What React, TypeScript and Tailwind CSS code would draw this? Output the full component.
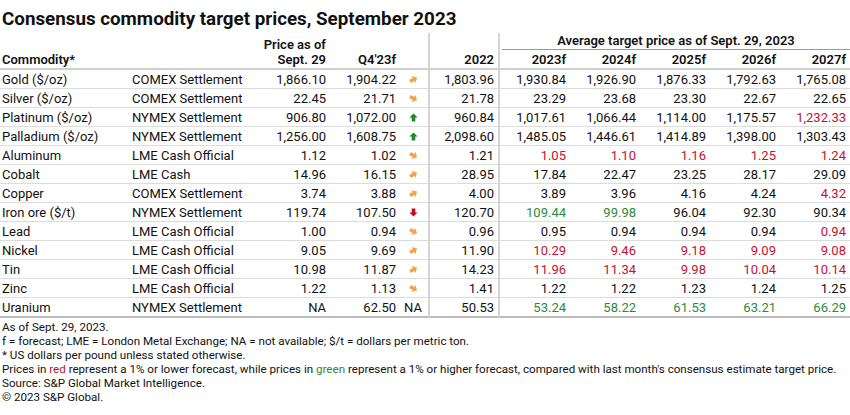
import React from "react";

type Trend = "up" | "down" | "flatUp" | "flatDown" | "na";
type C = "k" | "r" | "g";
type Row = {
  name: string;
  ex: string;
  price: string;
  q4: string;
  trend: Trend;
  y22: string;
  f: [string, C][];
};

const rows: Row[] = [
  { name: "Gold ($/oz)", ex: "COMEX Settlement", price: "1,866.10", q4: "1,904.22", trend: "flatUp", y22: "1,803.96", f: [["1,930.84", "k"], ["1,926.90", "k"], ["1,876.33", "k"], ["1,792.63", "k"], ["1,765.08", "k"]] },
  { name: "Silver ($/oz)", ex: "COMEX Settlement", price: "22.45", q4: "21.71", trend: "flatDown", y22: "21.78", f: [["23.29", "k"], ["23.68", "k"], ["23.30", "k"], ["22.67", "k"], ["22.65", "k"]] },
  { name: "Platinum ($/oz)", ex: "NYMEX Settlement", price: "906.80", q4: "1,072.00", trend: "up", y22: "960.84", f: [["1,017.61", "k"], ["1,066.44", "k"], ["1,114.00", "k"], ["1,175.57", "k"], ["1,232.33", "r"]] },
  { name: "Palladium ($/oz)", ex: "NYMEX Settlement", price: "1,256.00", q4: "1,608.75", trend: "up", y22: "2,098.60", f: [["1,485.05", "k"], ["1,446.61", "k"], ["1,414.89", "k"], ["1,398.00", "k"], ["1,303.43", "k"]] },
  { name: "Aluminum", ex: "LME Cash Official", price: "1.12", q4: "1.02", trend: "flatDown", y22: "1.21", f: [["1.05", "r"], ["1.10", "r"], ["1.16", "r"], ["1.25", "r"], ["1.24", "r"]] },
  { name: "Cobalt", ex: "LME Cash", price: "14.96", q4: "16.15", trend: "flatUp", y22: "28.95", f: [["17.84", "k"], ["22.47", "k"], ["23.25", "k"], ["28.17", "k"], ["29.09", "k"]] },
  { name: "Copper", ex: "COMEX Settlement", price: "3.74", q4: "3.88", trend: "flatUp", y22: "4.00", f: [["3.89", "k"], ["3.96", "k"], ["4.16", "k"], ["4.24", "k"], ["4.32", "r"]] },
  { name: "Iron ore ($/t)", ex: "NYMEX Settlement", price: "119.74", q4: "107.50", trend: "down", y22: "120.70", f: [["109.44", "g"], ["99.98", "g"], ["96.04", "k"], ["92.30", "k"], ["90.34", "k"]] },
  { name: "Lead", ex: "LME Cash Official", price: "1.00", q4: "0.94", trend: "flatDown", y22: "0.96", f: [["0.95", "k"], ["0.94", "k"], ["0.94", "k"], ["0.94", "k"], ["0.94", "r"]] },
  { name: "Nickel", ex: "LME Cash Official", price: "9.05", q4: "9.69", trend: "flatUp", y22: "11.90", f: [["10.29", "r"], ["9.46", "r"], ["9.18", "r"], ["9.09", "r"], ["9.08", "r"]] },
  { name: "Tin", ex: "LME Cash Official", price: "10.98", q4: "11.87", trend: "flatUp", y22: "14.23", f: [["11.96", "r"], ["11.34", "r"], ["9.98", "r"], ["10.04", "r"], ["10.14", "r"]] },
  { name: "Zinc", ex: "LME Cash Official", price: "1.22", q4: "1.13", trend: "flatDown", y22: "1.41", f: [["1.22", "k"], ["1.22", "k"], ["1.23", "k"], ["1.24", "k"], ["1.25", "k"]] },
  { name: "Uranium", ex: "NYMEX Settlement", price: "NA", q4: "62.50", trend: "na", y22: "50.53", f: [["53.24", "g"], ["58.22", "g"], ["61.53", "g"], ["63.21", "g"], ["66.29", "g"]] },
];

const colorClass: Record<C, string> = {
  k: "text-[#111111]",
  r: "text-[#c8102e]",
  g: "text-[#2a8c3a]",
};

function Arrow({ trend }: { trend: Trend }) {
  if (trend === "na") return <span className="text-[13px] leading-none">NA</span>;
  const fill =
    trend === "up" ? "#1a8a2e" : trend === "down" ? "#c00f1f" : "#f5a445";
  const rot =
    trend === "up" ? 0 : trend === "down" ? 180 : trend === "flatUp" ? 60 : 120;
  return (
    <svg width="9" height="9" viewBox="0 0 10 10" className="block">
      <g transform={`rotate(${rot} 5 5)`}>
        <path d="M5 0.5 L9.5 5 L7 5 L7 9.5 L3 9.5 L3 5 L0.5 5 Z" fill={fill} />
      </g>
    </svg>
  );
}

const grid =
  "grid grid-cols-[130px_120px_80px_70px_30px_70px_70px_70px_70px_70px_70px]";

export default function App() {
  return (
    <div
      className="w-[850px] h-[415px] bg-white text-[#111111] overflow-hidden"
      style={{ fontFamily: "Roboto, 'Liberation Sans', Arial, sans-serif" }}
    >
      <div className="h-[33px] pl-[2px] pt-[7px] text-[18.8px] font-bold leading-[24px]">
        Consensus commodity target prices, September 2023
      </div>

      {/* header */}
      <div className={`${grid} h-[37px] border-b-2 border-[#cfcfcf] text-[13px] font-semibold leading-[15px]`}>
        <div className="pl-[2px] flex items-end pb-[1px]">Commodity*</div>
        <div />
        <div className="flex flex-col items-end justify-end pr-[4px] pb-[1px]">
          <span>Price as of</span>
          <span>Sept. 29</span>
        </div>
        <div className="flex items-end justify-end pr-[4px] pb-[1px]">Q4'23f</div>
        <div className="border-r-2 border-[#d4d4d4]" />
        <div className="flex items-end justify-end pr-[4px] pb-[1px] border-r-2 border-[#d4d4d4]">2022</div>
        <div className="col-span-5 flex flex-col">
          <div className="h-[17px] ml-[2px] border-b border-[#9a9a9a] flex items-end justify-center pb-[1px]">
            Average target price as of Sept. 29, 2023
          </div>
          <div className="flex-1 grid grid-cols-5 items-end pb-[1px]">
            {["2023f", "2024f", "2025f", "2026f", "2027f"].map((y) => (
              <div key={y} className="text-right pr-[4px]">{y}</div>
            ))}
          </div>
        </div>
      </div>

      {/* rows */}
      {rows.map((r, i) => (
        <div
          key={r.name}
          className={`${grid} text-[13px] leading-[19px] ${
            i === rows.length - 1 ? "border-b-2 border-[#bdbdbd] h-[20px]" : "border-b border-[#dcdcdc] h-[19px]"
          }`}
        >
          <div className="pl-[2px] whitespace-nowrap">{r.name}</div>
          <div className="pl-[2px] whitespace-nowrap">{r.ex}</div>
          <div className="text-right pr-[4px]">{r.price}</div>
          <div className="text-right pr-[4px]">{r.q4}</div>
          <div className="flex items-center justify-center border-r-2 border-[#d4d4d4] pr-[2px]">
            <Arrow trend={r.trend} />
          </div>
          <div className="text-right pr-[4px] border-r-2 border-[#d4d4d4]">{r.y22}</div>
          {r.f.map(([v, c], j) => (
            <div key={j} className={`text-right pr-[4px] ${colorClass[c]}`}>{v}</div>
          ))}
        </div>
      ))}

      {/* footer */}
      <div className="pl-[2px] pt-[2px] text-[11.6px] leading-[14px]">
        <div>As of Sept. 29, 2023.</div>
        <div>f = forecast; LME = London Metal Exchange; NA = not available; $/t = dollars per metric ton.</div>
        <div>* US dollars per pound unless stated otherwise.</div>
        <div>
          Prices in <span className="text-[#c8102e]">red</span> represent a 1% or lower forecast, while prices in{" "}
          <span className="text-[#2a8c3a]">green</span> represent a 1% or higher forecast, compared with last month's consensus estimate target price.
        </div>
        <div>Source: S&amp;P Global Market Intelligence.</div>
        <div>© 2023 S&amp;P Global.</div>
      </div>
    </div>
  );
}
